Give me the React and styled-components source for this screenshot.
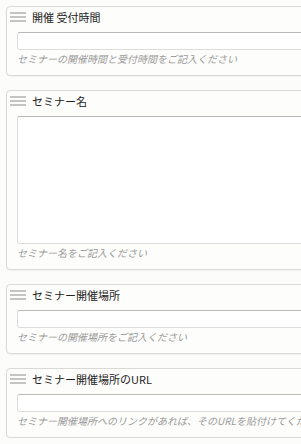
import React from "react";
import styled, { createGlobalStyle } from "styled-components";

const GlobalStyle = createGlobalStyle`
  html, body {
    margin: 0;
    padding: 0;
    background: #fcfcfa;
    overflow: hidden;
  }
  body {
    font-family: "Noto Sans CJK JP", "Noto Sans", sans-serif;
  }
`;

const Page = styled.div`
  display: flex;
  flex-direction: column;
  gap: 14px;
  padding: 6px 0 0 6px;
  width: 360px;
`;

const Card = styled.div`
  border: 1px solid #d9d9d6;
  border-radius: 4px;
  background: #fdfdfb;
  padding: 1px 10px 9px 10px;
  box-shadow: 0 1px 1px rgba(0, 0, 0, 0.04);
`;

const Header = styled.div`
  display: flex;
  align-items: center;
  gap: 6px;
  height: 18px;
  margin-left: -7px;
`;

const Handle = styled.span`
  display: flex;
  flex-direction: column;
  gap: 2px;
  width: 16px;
  span {
    display: block;
    height: 2px;
    background: #c4c4c2;
  }
`;

const Title = styled.span`
  font-size: 11px;
  color: #222;
  line-height: 18px;
`;

const Field = styled.div`
  margin-top: 6px;
  height: ${(p) => p.h}px;
  border: 1px solid #dcdcda;
  border-top-color: #b9b9b7;
  border-radius: 3px;
  background: #fff;
  box-sizing: border-box;
`;

const Hint = styled.div`
  font-size: 10px;
  font-style: italic;
  color: #9a9a9a;
  line-height: 14px;
  margin-top: 2px;
  white-space: nowrap;
`;

const items = [
  { title: "開催 受付時間", hint: "セミナーの開催時間と受付時間をご記入ください", h: 18 },
  { title: "セミナー名", hint: "セミナー名をご記入ください", h: 128 },
  { title: "セミナー開催場所", hint: "セミナーの開催場所をご記入ください", h: 18 },
  { title: "セミナー開催場所のURL", hint: "セミナー開催場所へのリンクがあれば、そのURLを貼付けてください", h: 18 },
];

export default function App() {
  return (
    <>
      <GlobalStyle />
      <Page>
        {items.map((it) => (
          <Card key={it.title}>
            <Header>
              <Handle>
                <span />
                <span />
                <span />
              </Handle>
              <Title>{it.title}</Title>
            </Header>
            <Field h={it.h} />
            <Hint>{it.hint}</Hint>
          </Card>
        ))}
      </Page>
    </>
  );
}
